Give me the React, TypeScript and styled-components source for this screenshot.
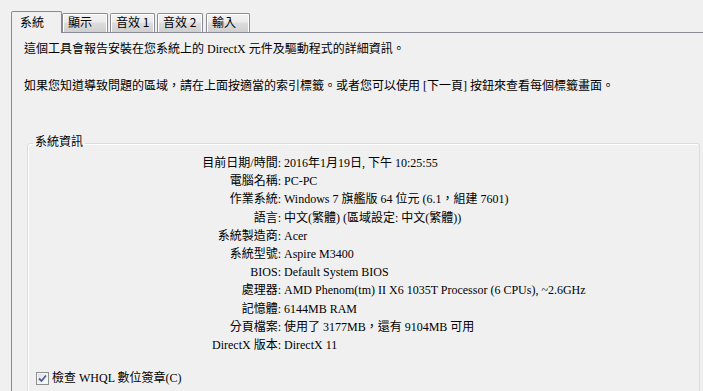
import React from "react";
import styled, { createGlobalStyle } from "styled-components";

const GlobalStyle = createGlobalStyle`
  html, body {
    margin: 0;
    padding: 0;
    background: #f0f0f0;
  }
  body {
    width: 703px;
    height: 391px;
    overflow: hidden;
    font-family: "Liberation Serif", "Noto Sans CJK TC", serif;
    font-size: 12px;
    color: #000;
  }
`;

const Window = styled.div`
  box-sizing: border-box;
  height: 391px;
  padding: 11px 0 0 11px;
  overflow: hidden;
`;

const TabStrip = styled.div`
  display: flex;
  align-items: flex-end;
  height: 21px;
  position: relative;
  z-index: 1;
`;

const Tab = styled.div<{ $active?: boolean; $w: number; $gap?: number }>`
  box-sizing: border-box;
  width: ${(p) => p.$w}px;
  margin-left: ${(p) => p.$gap ?? 0}px;
  height: ${(p) => (p.$active ? 22 : 19)}px;
  margin-bottom: ${(p) => (p.$active ? -1 : 0)}px;
  padding: ${(p) => (p.$active ? "3px 0 0 8px" : "1px 0 0 5px")};
  border: 1px solid #898c95;
  border-bottom: none;
  border-radius: 2px 2px 0 0;
  background: ${(p) =>
    p.$active
      ? "#f0f0f0"
      : "linear-gradient(to bottom, #f2f2f2 0%, #ebebeb 45%, #dddddd 50%, #cfcfcf 100%)"};
  box-shadow: ${(p) => (p.$active ? "none" : "inset 1px 1px 0 #ffffff, inset -1px 0 0 #ffffff")};
  font-family: "Noto Sans CJK TC", "Liberation Serif", sans-serif;
  font-size: 12px;
  line-height: 14px;
  white-space: nowrap;
`;

const Panel = styled.div`
  border-top: 1px solid #898c95;
  border-left: 1px solid #898c95;
  padding: 8px 3px 0 12px;
`;

const Intro = styled.p<{ $after: number }>`
  margin: 0 0 ${(p) => p.$after}px 0;
  line-height: 16px;
  white-space: nowrap;
`;

const GroupBox = styled.fieldset`
  margin: 0 0 0 3px;
  padding: 1px 0 30px 0;
  border: 1px solid #d5dfe5;
  border-radius: 3px;
  box-shadow: inset 1px 1px 0 #ffffff;
  min-width: 0;
`;

const GroupTitle = styled.legend`
  margin-left: 5px;
  padding: 0 2px 5px 2px;
  line-height: 14px;
  font-family: "Noto Sans CJK TC", sans-serif;
`;

const InfoGrid = styled.div`
  display: grid;
  grid-template-columns: 253px 1fr;
  column-gap: 3px;
  grid-auto-rows: 18.2px;
  line-height: 18.2px;
  white-space: nowrap;
`;

const Label = styled.div`
  text-align: right;
`;

const Value = styled.div``;

const CheckRow = styled.label`
  display: flex;
  align-items: center;
  gap: 3px;
  margin-top: 16px;
  padding-left: 8px;
  height: 16px;
  line-height: 16px;
  white-space: nowrap;
`;

const CheckBox = styled.span`
  box-sizing: border-box;
  width: 13px;
  height: 13px;
  border: 1px solid #8e8f8f;
  background: linear-gradient(135deg, #dcdcdc 0%, #f4f4f4 60%, #ffffff 100%);
  box-shadow: inset 0 0 0 1px #f4f4f4;
  display: flex;
  align-items: center;
  justify-content: center;
`;

const rows: [string, string][] = [
  ["目前日期/時間:", "2016年1月19日, 下午 10:25:55"],
  ["電腦名稱:", "PC-PC"],
  ["作業系統:", "Windows 7 旗艦版 64 位元 (6.1，組建 7601)"],
  ["語言:", "中文(繁體) (區域設定: 中文(繁體))"],
  ["系統製造商:", "Acer"],
  ["系統型號:", "Aspire M3400"],
  ["BIOS:", "Default System BIOS"],
  ["處理器:", "AMD Phenom(tm) II X6 1035T Processor (6 CPUs), ~2.6GHz"],
  ["記憶體:", "6144MB RAM"],
  ["分頁檔案:", "使用了 3177MB，還有 9104MB 可用"],
  ["DirectX 版本:", "DirectX 11"],
];

export default function App() {
  return (
    <>
      <GlobalStyle />
      <Window>
        <TabStrip>
          <Tab $active $w={51}>系統</Tab>
          <Tab $w={46}>顯示</Tab>
          <Tab $w={45} $gap={2}>音效 1</Tab>
          <Tab $w={46} $gap={2}>音效 2</Tab>
          <Tab $w={44} $gap={3}>輸入</Tab>
        </TabStrip>
        <Panel>
          <Intro $after={21}>這個工具會報告安裝在您系統上的 DirectX 元件及驅動程式的詳細資訊。</Intro>
          <Intro $after={40}>
            如果您知道導致問題的區域，請在上面按適當的索引標籤。或者您可以使用 [下一頁] 按鈕來查看每個標籤畫面。
          </Intro>
          <GroupBox>
            <GroupTitle>系統資訊</GroupTitle>
            <InfoGrid>
              {rows.map(([k, v]) => (
                <React.Fragment key={k}>
                  <Label>{k}</Label>
                  <Value>{v}</Value>
                </React.Fragment>
              ))}
            </InfoGrid>
            <CheckRow>
              <CheckBox>
                <svg width="9" height="9" viewBox="0 0 9 9">
                  <path d="M1 4.5 L3.5 7 L8 1.5" fill="none" stroke="#4a5f97" strokeWidth="1.8" />
                </svg>
              </CheckBox>
              檢查 WHQL 數位簽章(C)
            </CheckRow>
          </GroupBox>
        </Panel>
      </Window>
    </>
  );
}
